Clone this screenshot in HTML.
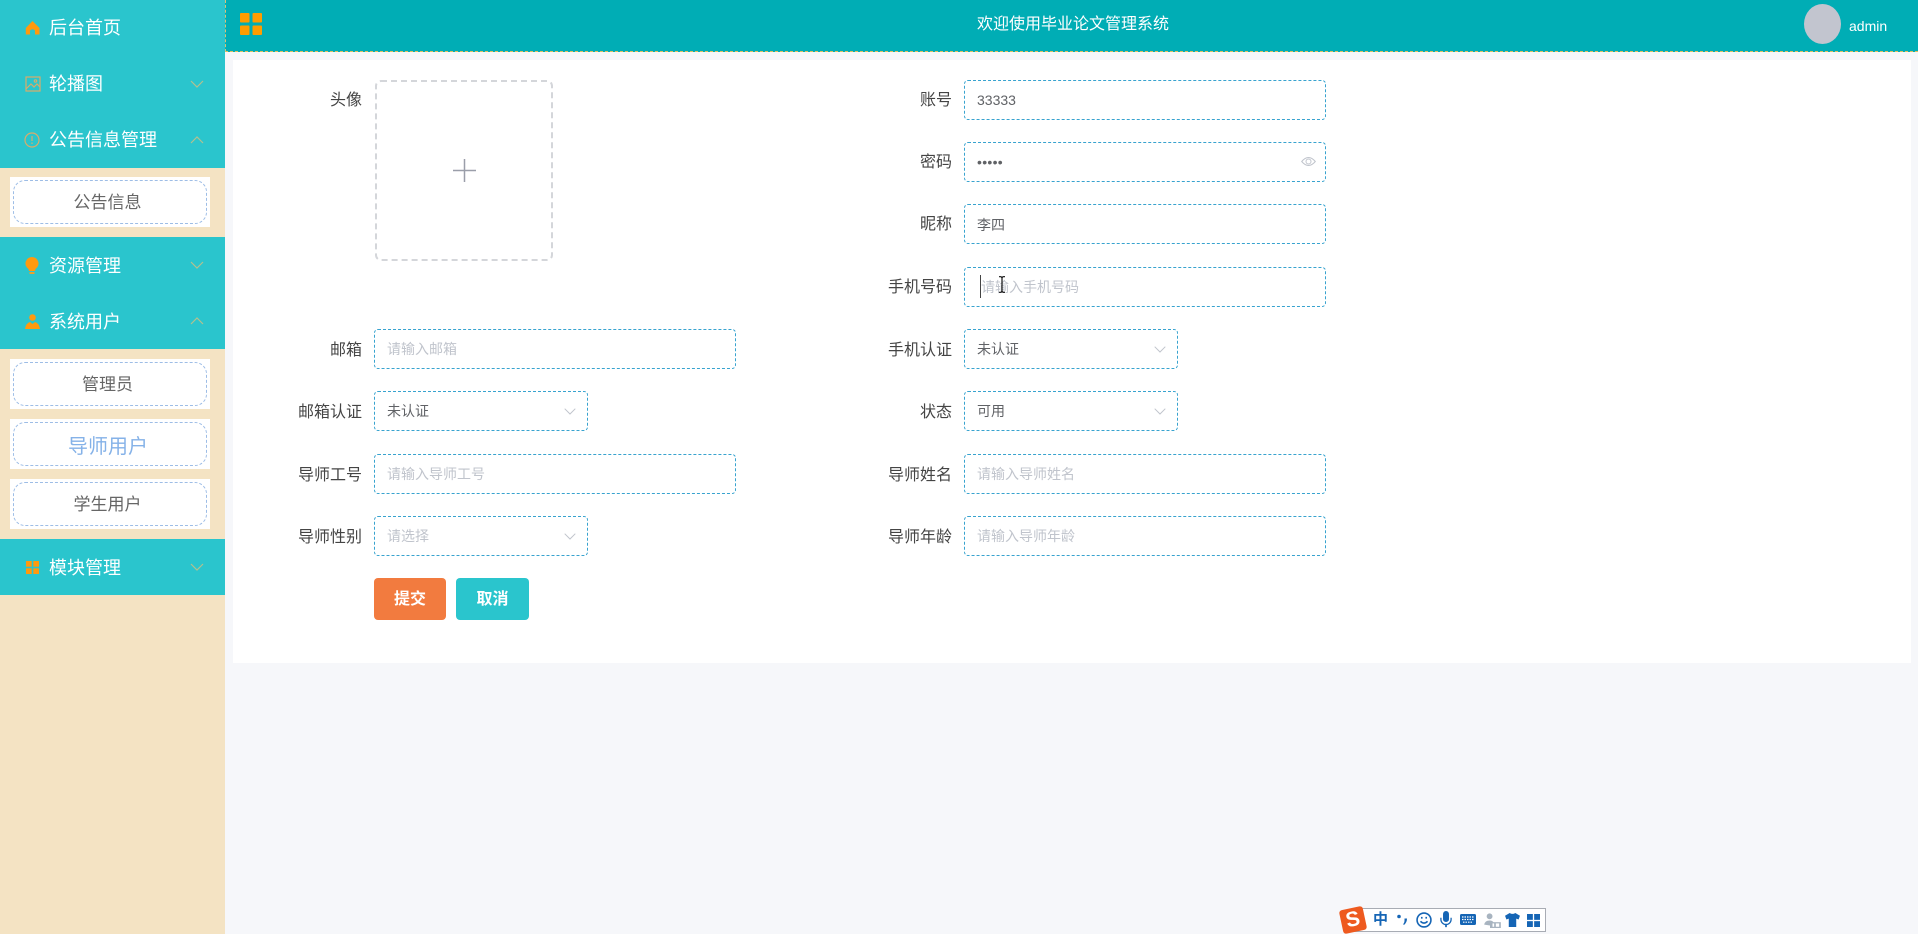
<!DOCTYPE html>
<html lang="zh-CN">
<head>
<meta charset="utf-8">
<title>毕业论文管理系统</title>
<style>
*{box-sizing:border-box;margin:0;padding:0}
html,body{width:1918px;height:934px;overflow:hidden;background:#f6f7fa;font-family:"Liberation Sans","Noto Sans CJK SC",sans-serif}
.a{position:absolute}
#side{left:0;top:0;width:225px;height:934px;background:#f4e3c3}
.m{position:absolute;left:0;width:225px;height:56px;background:#2ac5cd;color:#fff;font-size:18px;line-height:56px;padding-left:49px;white-space:nowrap}
.m svg{position:absolute}
.d1{line-height:58px}
.s{position:absolute;left:10px;width:200px;height:50px;background:#fff}
.s div{position:absolute;left:3px;top:3px;width:194px;height:44px;border:1px dashed #9dbde6;border-radius:12px;text-align:center;line-height:44px;font-size:17px;color:#666;padding-right:5px}
.arr{left:190px;top:24px}
#head{left:225px;top:0;width:1693px;height:52px;background:#00adb5;border-bottom:1px dashed #e0c060;border-left:1px dashed #d8c27a}
#card{left:233px;top:60px;width:1678px;height:603px;background:#fff}
.l{position:absolute;width:120px;text-align:right;font-size:16px;color:#444;line-height:24px;white-space:nowrap;margin-top:2px}
.i{position:absolute;height:40px;border:1px dashed #38a3cf;border-radius:4px;font-size:14px;line-height:38px;padding-left:12px;color:#606266;background:#fff;white-space:nowrap}
.p{color:#c0c4cc}
.i svg{position:absolute}
.btn{position:absolute;top:578px;height:42px;border-radius:4px;color:#fff;font-size:16px;font-weight:bold;text-align:center;line-height:43px}
</style>
</head>
<body>
<div id="side" class="a">
  <div class="m" style="top:0">后台首页
    <svg style="left:25px;top:20px" width="15" height="15" viewBox="0 0 15 15"><path d="M7.5 1L14.5 8V14.5H10V10.5Q7.5 8 5 10.5V14.5H.8V8Z" fill="#ff9a0e"/></svg></div>
  <div class="m" style="top:56px">轮播图
    <svg style="left:25px;top:20px" width="16" height="16" viewBox="0 0 16 16" fill="none" stroke="#d9ac6a" stroke-width="1.2"><rect x="1" y="1" width="14" height="14"/><path d="M1 13L6 8l3 3 3-3 3 3"/><circle cx="10.500" cy="5" r="1.200"/></svg>
    <svg class="a arr" width="14" height="8" viewBox="0 0 14 8" fill="none" stroke="#b4c08f" stroke-width="1.200"><path d="M1 1l6 6 6-6"/></svg></div>
  <div class="m" style="top:112px">公告信息管理
    <svg style="left:24px;top:20px" width="16" height="16" viewBox="0 0 16 16" fill="none" stroke="#d9ac6a" stroke-width="1.200"><circle cx="8" cy="8" r="7"/><path d="M8 4v5M8 10.500v1.500"/></svg>
    <svg class="a arr" width="14" height="8" viewBox="0 0 14 8" fill="none" stroke="#b4c08f" stroke-width="1.200"><path d="M1 7l6-6 6 6"/></svg></div>
  <div class="s" style="top:177px"><div>公告信息</div></div>
  <div class="m d1" style="top:237px">资源管理
    <svg style="left:25px;top:20px" width="14" height="18" viewBox="0 0 14 18"><path d="M7 0a6.500 6.500 0 0 1 3.500 12l-.5 2H4l-.5-2A6.500 6.500 0 0 1 7 0z" fill="#ff9a0e"/><rect x="4.500" y="15" width="5" height="2" fill="#e8a030"/></svg>
    <svg class="a arr" width="14" height="8" viewBox="0 0 14 8" fill="none" stroke="#b4c08f" stroke-width="1.200"><path d="M1 1l6 6 6-6"/></svg></div>
  <div class="m d1" style="top:293px">系统用户
    <svg style="left:25px;top:21px" width="15" height="15" viewBox="0 0 15 15"><circle cx="7.500" cy="3.500" r="3.300" fill="#ff9a0e"/><path d="M0 15q1-6 5-7l2.500 2 2.500-2q4 1 5 7z" fill="#ff9a0e"/></svg>
    <svg class="a arr" width="14" height="8" viewBox="0 0 14 8" fill="none" stroke="#b4c08f" stroke-width="1.200"><path d="M1 7l6-6 6 6"/></svg></div>
  <div class="s" style="top:359px"><div>管理员</div></div>
  <div class="s" style="top:419px"><div style="font-size:20px;color:#85b2e8;line-height:48px;padding-right:4px">导师用户</div></div>
  <div class="s" style="top:479px"><div>学生用户</div></div>
  <div class="m d1" style="top:539px">模块管理
    <svg style="left:26px;top:22px" width="13" height="13" viewBox="0 0 13 13" fill="#ff9a0e"><rect width="5.700" height="5.700"/><rect x="7.300" width="5.700" height="5.700"/><rect y="7.300" width="5.700" height="5.700"/><rect x="7.300" y="7.300" width="5.700" height="5.700"/></svg>
    <svg class="a arr" width="14" height="8" viewBox="0 0 14 8" fill="none" stroke="#b4c08f" stroke-width="1.200"><path d="M1 1l6 6 6-6"/></svg></div>
</div>

<div id="head" class="a"></div>
<svg class="a" style="left:240px;top:13px" width="22" height="22" viewBox="0 0 22 22" fill="#ff9c00"><rect width="9.500" height="9.500" rx="1"/><rect x="12.500" width="9.500" height="9.500" rx="1"/><rect y="12.500" width="9.500" height="9.500" rx="1"/><rect x="12.500" y="12.500" width="9.500" height="9.500" rx="1"/></svg>
<div class="a" style="left:977px;top:13px;font-size:16px;line-height:24px;color:#fff;white-space:nowrap">欢迎使用毕业论文管理系统</div>
<div class="a" style="left:1804px;top:4px;width:37px;height:40px;border-radius:50%;background:#c2c5cf"></div>
<div class="a" style="left:1849px;top:18px;font-size:14px;line-height:16px;color:#fff">admin</div>

<div id="card" class="a"></div>

<div class="l" style="left:242px;top:87px">头像</div>
<div class="a" style="left:375px;top:80px;width:178px;height:181px;border:2px dashed #d4d6da;border-radius:6px;background:#fff"></div>
<svg class="a" style="left:453px;top:159px" width="23" height="23" viewBox="0 0 23 23" stroke="#9a9ea9" stroke-width="1.500"><path d="M0 11.500h23M11.500 0v23"/></svg>

<div class="l" style="left:832px;top:87px">账号</div>
<div class="i" style="left:964px;top:80px;width:362px">33333</div>
<div class="l" style="left:832px;top:149px">密码</div>
<div class="i" style="left:964px;top:142px;width:362px;font-size:14px;letter-spacing:.3px">•••••
  <svg style="left:336px;top:13px" width="15" height="11" viewBox="0 0 15 11" fill="none" stroke="#c0c4cc" stroke-width="1"><path d="M.7 5.500Q7.500-2.500 14.300 5.500 7.500 13.500.7 5.500z"/><circle cx="7.500" cy="5.500" r="2.500"/></svg></div>
<div class="l" style="left:832px;top:211px">昵称</div>
<div class="i" style="left:964px;top:204px;width:362px;line-height:40px">李四</div>
<div class="l" style="left:832px;top:274px">手机号码</div>
<div class="i p" style="left:964px;top:267px;width:362px;padding-left:16px">请输入手机号码</div>
<div class="a" style="left:980px;top:275px;width:1px;height:23px;background:#444"></div>
<svg class="a" style="left:998px;top:276px" width="8" height="17" viewBox="0 0 8 17" fill="none" stroke="#111" stroke-width="1.200"><path d="M1 .7h2l1 1 1-1h2M4 1.700v13.600M1 16.300h2l1-1 1 1h2"/></svg>

<div class="l" style="left:242px;top:337px">邮箱</div>
<div class="i p" style="left:374px;top:329px;width:362px">请输入邮箱</div>
<div class="l" style="left:832px;top:337px">手机认证</div>
<div class="i" style="left:964px;top:329px;width:214px">未认证
  <svg style="left:189px;top:16px" width="12" height="7" viewBox="0 0 12 7" fill="none" stroke="#c0c4cc" stroke-width="1"><path d="M.7.7L6 6 11.300.7"/></svg></div>

<div class="l" style="left:242px;top:399px">邮箱认证</div>
<div class="i" style="left:374px;top:391px;width:214px">未认证
  <svg style="left:189px;top:16px" width="12" height="7" viewBox="0 0 12 7" fill="none" stroke="#c0c4cc" stroke-width="1"><path d="M.7.7L6 6 11.300.7"/></svg></div>
<div class="l" style="left:832px;top:399px">状态</div>
<div class="i" style="left:964px;top:391px;width:214px">可用
  <svg style="left:189px;top:16px" width="12" height="7" viewBox="0 0 12 7" fill="none" stroke="#c0c4cc" stroke-width="1"><path d="M.7.7L6 6 11.300.7"/></svg></div>

<div class="l" style="left:242px;top:462px">导师工号</div>
<div class="i p" style="left:374px;top:454px;width:362px">请输入导师工号</div>
<div class="l" style="left:832px;top:462px">导师姓名</div>
<div class="i p" style="left:964px;top:454px;width:362px">请输入导师姓名</div>

<div class="l" style="left:242px;top:524px">导师性别</div>
<div class="i p" style="left:374px;top:516px;width:214px">请选择
  <svg style="left:189px;top:16px" width="12" height="7" viewBox="0 0 12 7" fill="none" stroke="#c0c4cc" stroke-width="1"><path d="M.7.7L6 6 11.300.7"/></svg></div>
<div class="l" style="left:832px;top:524px">导师年龄</div>
<div class="i p" style="left:964px;top:516px;width:362px">请输入导师年龄</div>

<div class="btn" style="left:374px;width:72px;background:#f27b3f">提交</div>
<div class="btn" style="left:456px;width:73px;background:#2ac5cd">取消</div>

<!-- IME toolbar -->
<div class="a" style="left:1352px;top:908px;width:194px;height:24px;background:#fff;border:1px solid #a8acb4"></div>
<div class="a" style="left:1341px;top:908px;width:24px;height:24px;background:#ee5a1f;border-radius:3px;transform:rotate(-12deg);color:#fff;font-weight:bold;font-size:21px;line-height:24px;text-align:center">S</div>
<div class="a" style="left:1373px;top:910px;font-size:15px;line-height:20px;font-weight:bold;color:#1565b5">中</div>
<svg class="a" style="left:1397px;top:914px" width="11" height="12" viewBox="0 0 11 12" fill="#1565b5"><circle cx="2" cy="2.500" r="1.800"/><path d="M7.500 4.500H10q0 4-3 6.500l-.8-.8q1.300-1.700 1.300-3.200z"/></svg>
<svg class="a" style="left:1416px;top:912px" width="16" height="16" viewBox="0 0 18 18" fill="none" stroke="#1565b5" stroke-width="1.800"><circle cx="9" cy="9" r="7.800"/><path d="M5 10.500q4 4 8 0M6.500 5.500v2M11.500 5.500v2"/></svg>
<svg class="a" style="left:1440px;top:911px" width="12" height="17" viewBox="0 0 14 20" fill="#1565b5"><rect x="3.500" y="0" width="7" height="13" rx="3.500"/><path d="M1 8v2a6 6 0 0 0 12 0V8" fill="none" stroke="#1565b5" stroke-width="1.500"/><rect x="6" y="15" width="2" height="4"/></svg>
<svg class="a" style="left:1460px;top:914px" width="16" height="11" viewBox="0 0 16 11"><rect width="16" height="11" rx="1.500" fill="#1565b5"/><path d="M2 3h12M2 5.500h12M3 8.200h10" stroke="#fff" stroke-width="1.200" stroke-dasharray="1.500 1"/></svg>
<svg class="a" style="left:1484px;top:913px" width="17" height="15" viewBox="0 0 20 18"><circle cx="6.500" cy="4" r="3.500" fill="#a8b4c0"/><path d="M0 14q1-5 6.500-5 4 0 5 3H7v3z" fill="#a8b4c0"/><rect x="7" y="11" width="13" height="7" fill="#a8b4c0"/><rect x="10" y="12.500" width="2" height="4" fill="#fff"/><rect x="14" y="12.500" width="4" height="4" fill="#fff"/></svg>
<svg class="a" style="left:1505px;top:913px" width="15" height="14" viewBox="0 0 16 15" fill="#1565b5"><path d="M5 0L0 3l1.500 4L4 6v9h8V6l2.500 1L16 3l-5-3Q8 2 5 0z"/></svg>
<svg class="a" style="left:1527px;top:914px" width="13" height="13" viewBox="0 0 14 14" fill="#1565b5"><rect width="6.300" height="6.300"/><rect x="7.700" width="6.300" height="6.300"/><rect y="7.700" width="6.300" height="6.300"/><rect x="7.700" y="7.700" width="6.300" height="6.300"/></svg>
</body>
</html>
